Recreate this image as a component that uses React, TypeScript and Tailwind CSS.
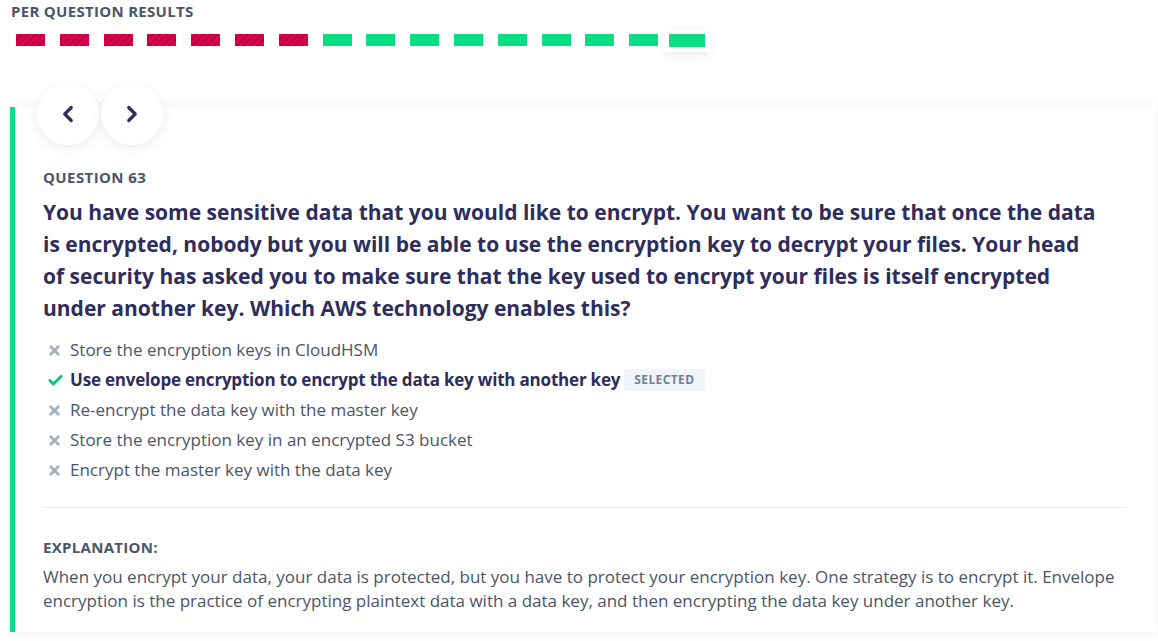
import { ChevronLeft, ChevronRight, Check, X } from "lucide-react";

const results = [
  false, false, false, false, false, false, false,
  true, true, true, true, true, true, true, true, true,
];

const options = [
  { text: "Store the encryption keys in CloudHSM", correct: false },
  { text: "Use envelope encryption to encrypt the data key with another key", correct: true },
  { text: "Re-encrypt the data key with the master key", correct: false },
  { text: "Store the encryption key in an encrypted S3 bucket", correct: false },
  { text: "Encrypt the master key with the data key", correct: false },
];

const stripes = {
  backgroundImage:
    "repeating-linear-gradient(135deg, #e0004d 0px, #e0004d 3px, #b8003f 3px, #b8003f 5px)",
};

const App = () => {
  return (
    <div className="w-full min-h-screen bg-white font-['Open_Sans',sans-serif] text-[#4a5568]">
      <div className="pl-[11px] pt-[1px]">
        <h2 className="text-[15px] font-bold tracking-[0.3px] leading-[20px] text-[#4a5568]">
          PER QUESTION RESULTS
        </h2>
        <div className="flex items-center mt-[7px] h-[24px] pl-[5px]">
          {results.map((ok, i) => {
            const last = i === results.length - 1;
            if (last) {
              return (
                <div
                  key={i}
                  className="-ml-[10px] px-[6px] py-[5px] bg-white shadow-[0_3px_10px_rgba(0,0,0,0.08)]"
                >
                  <div className="w-[36px] h-[13px] bg-[#0bdd82]" />
                </div>
              );
            }
            return (
              <div
                key={i}
                className={`w-[29px] h-[12px] mr-[14.8px] ${ok ? "bg-[#0bdd82]" : ""}`}
                style={ok ? undefined : stripes}
              />
            );
          })}
        </div>
      </div>

      <div className="flex flex-col ml-[10px] mr-[2px] mt-[55px] bg-white border-l-[5px] border-[#0bdd82] shadow-[0_0_14px_rgba(0,0,0,0.07)]">
        <div className="flex gap-[2px] ml-[22px] -mt-[24px]">
          <button className="w-[62px] h-[62px] rounded-full bg-white shadow-[0_3px_12px_rgba(0,0,0,0.08)] flex items-center justify-center text-[#2e2d5c]">
            <ChevronLeft size={26} strokeWidth={3} />
          </button>
          <button className="w-[62px] h-[62px] rounded-full bg-white shadow-[0_3px_12px_rgba(0,0,0,0.08)] flex items-center justify-center text-[#2e2d5c]">
            <ChevronRight size={26} strokeWidth={3} />
          </button>
        </div>

        <div className="pl-[28px] pr-[30px] pb-[19px]">
          <h3 className="mt-[22px] text-[15px] font-bold tracking-[0.4px] leading-[20px] text-[#4a5568]">
            QUESTION 63
          </h3>
          <p className="mt-[9px] pr-[24px] text-[21px] font-bold leading-[32px] text-[#2e2d5c]">
            You have some sensitive data that you would like to encrypt. You want to be sure that once the data is
            encrypted, nobody but you will be able to use the encryption key to decrypt your files. Your head of
            security has asked you to make sure that the key used to encrypt your files is itself encrypted under
            another key. Which AWS technology enables this?
          </p>

          <ul className="mt-[11px] flex flex-col">
            {options.map((o, i) => (
              <li key={i} className="flex items-center h-[30px] text-[17px]">
                <span className="w-[27px] pl-[4px] flex items-center">
                  {o.correct ? (
                    <Check size={17} strokeWidth={4} className="text-[#0bc66f]" />
                  ) : (
                    <X size={15} strokeWidth={4.5} className="text-[#a7b0bd]" />
                  )}
                </span>
                <span
                  className={
                    o.correct
                      ? "font-bold text-[#2e2d5c] tracking-[-0.2px]"
                      : "text-[#4a5568]"
                  }
                >
                  {o.text}
                </span>
                {o.correct && (
                  <span className="ml-[4px] px-[10px] py-[2px] rounded-[3px] bg-[#f1f5f9] text-[12px] font-bold tracking-[0.4px] text-[#718096]">
                    SELECTED
                  </span>
                )}
              </li>
            ))}
          </ul>

          <div className="mt-[22px] border-t border-[#e8e8ec]" />

          <h4 className="mt-[29px] text-[15px] font-bold tracking-[0.3px] leading-[20px] text-[#4a5568]">
            EXPLANATION:
          </h4>
          <p className="mt-[8px] text-[17px] leading-[24px] text-[#4a5568]">
            When you encrypt your data, your data is protected, but you have to protect your encryption key. One
            strategy is to encrypt it. Envelope encryption is the practice of encrypting plaintext data with a data key,
            and then encrypting the data key under another key.
          </p>
        </div>
      </div>
    </div>
  );
};

export default App;
